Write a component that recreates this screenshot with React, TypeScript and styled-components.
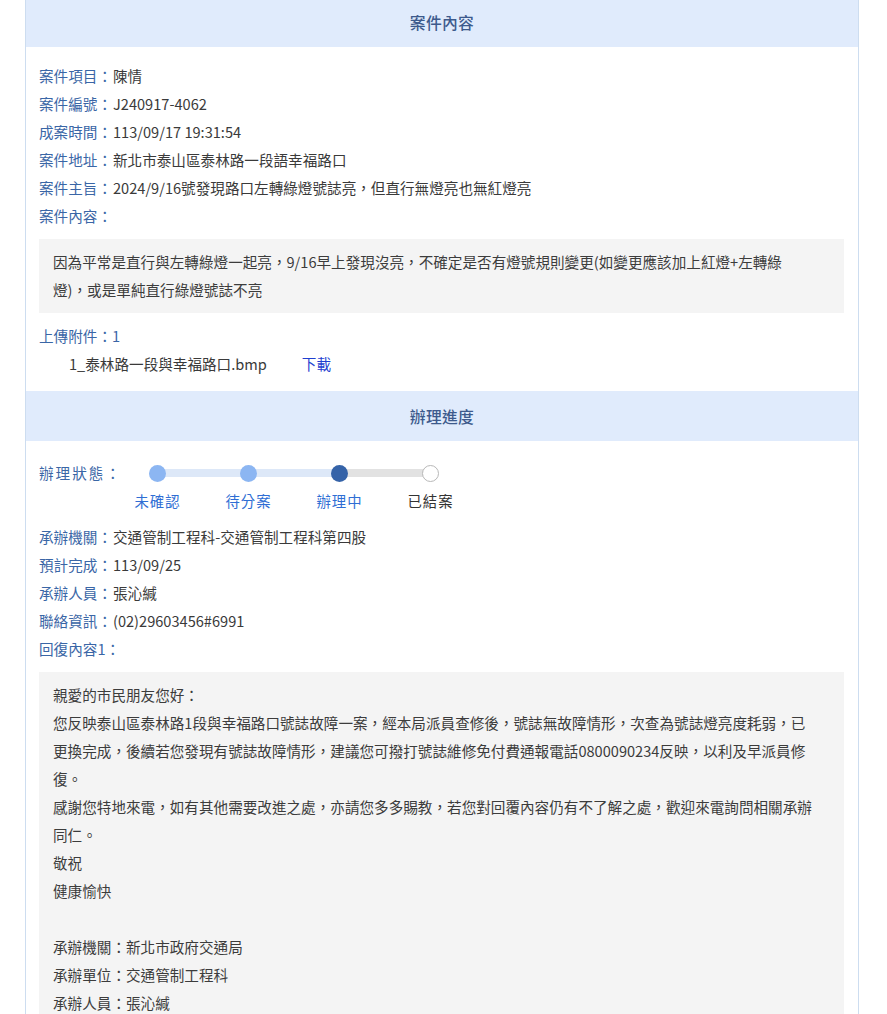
import styled, { createGlobalStyle } from 'styled-components';

const GlobalStyle = createGlobalStyle`
    html, body {
        margin: 0;
        padding: 0;
        background: #ffffff;
    }
    body {
        font-family: "Noto Sans CJK TC", "Noto Sans", sans-serif;
        color: #333333;
    }
`;

type Field = { label: string; value: string };

const caseFields: Field[] = [
    { label: '案件項目：', value: '陳情' },
    { label: '案件編號：', value: 'J240917-4062' },
    { label: '成案時間：', value: '113/09/17 19:31:54' },
    { label: '案件地址：', value: '新北市泰山區泰林路一段語幸福路口' },
    { label: '案件主旨：', value: '2024/9/16號發現路口左轉綠燈號誌亮，但直行無燈亮也無紅燈亮' },
    { label: '案件內容：', value: '' },
];

const handleFields: Field[] = [
    { label: '承辦機關：', value: '交通管制工程科-交通管制工程科第四股' },
    { label: '預計完成：', value: '113/09/25' },
    { label: '承辦人員：', value: '張沁緘' },
    { label: '聯絡資訊：', value: '(02)29603456#6991' },
    { label: '回復內容1：', value: '' },
];

const steps = [
    { name: '未確認', state: 'done' },
    { name: '待分案', state: 'done' },
    { name: '辦理中', state: 'current' },
    { name: '已結案', state: 'todo' },
] as const;

// lines kept as the source page wraps them
const caseContent = [
    '因為平常是直行與左轉綠燈一起亮，9/16早上發現沒亮，不確定是否有燈號規則變更(如變更應該加上紅燈+左轉綠',
    '燈)，或是單純直行綠燈號誌不亮',
];

const replyLines = [
    '親愛的市民朋友您好：',
    '您反映泰山區泰林路1段與幸福路口號誌故障一案，經本局派員查修後，號誌無故障情形，次查為號誌燈亮度耗弱，已',
    '更換完成，後續若您發現有號誌故障情形，建議您可撥打號誌維修免付費通報電話0800090234反映，以利及早派員修',
    '復。',
    '感謝您特地來電，如有其他需要改進之處，亦請您多多賜教，若您對回覆內容仍有不了解之處，歡迎來電詢問相關承辦',
    '同仁。',
    '敬祝',
    '健康愉快',
    '',
    '承辦機關：新北市政府交通局',
    '承辦單位：交通管制工程科',
    '承辦人員：張沁緘',
];

const App = () => {
    return (
        <>
            <GlobalStyle />
            <Card>
                <SectionHeader>案件內容</SectionHeader>
                <Section>
                    {caseFields.map((f) => (
                        <Row key={f.label}>
                            <Label>{f.label}</Label>
                            <Value>{f.value}</Value>
                        </Row>
                    ))}
                    <TextBox>
                        {caseContent.map((line, i) => (
                            <TextLine key={i}>{line}</TextLine>
                        ))}
                    </TextBox>
                    <Row $gap>
                        <Label>上傳附件：1</Label>
                    </Row>
                    <Attachment>
                        <span>1_泰林路一段與幸福路口.bmp</span>
                        <DownloadLink href="#">下載</DownloadLink>
                    </Attachment>
                </Section>

                <SectionHeader>辦理進度</SectionHeader>
                <Section>
                    <StatusRow>
                        <StatusLabel>辦理狀態：</StatusLabel>
                        <Steps>
                            {steps.map((s, i) => (
                                <Step key={s.name} $index={i} $state={s.state}>
                                    <Dot $state={s.state} />
                                    <StepName $state={s.state}>{s.name}</StepName>
                                </Step>
                            ))}
                        </Steps>
                    </StatusRow>
                    {handleFields.map((f) => (
                        <Row key={f.label}>
                            <Label>{f.label}</Label>
                            <Value>{f.value}</Value>
                        </Row>
                    ))}
                    <TextBox>
                        {replyLines.map((line, i) => (
                            <TextLine key={i}>{line || '\u00a0'}</TextLine>
                        ))}
                    </TextBox>
                </Section>
            </Card>
        </>
    );
};
export default App;

const Card = styled.main`
    width: 832px;
    margin: -3px 0 0 25px;
    border-left: 1px solid #cdddf0;
    border-right: 1px solid #cdddf0;
    background: #ffffff;
    font-size: 14.6px;
`;

const SectionHeader = styled.h2`
    margin: 0;
    height: 50px;
    display: flex;
    align-items: center;
    justify-content: center;
    background: #e0ebfc;
    color: #3d5a8c;
    font-size: 15.8px;
    font-weight: 500;
    letter-spacing: 0.3px;
`;

const Section = styled.section`
    padding: 15px 14px 13px 13px;
`;

const Row = styled.div<{ $gap?: boolean }>`
    display: flex;
    line-height: 28px;
    margin-top: ${(p) => (p.$gap ? '9px' : '0')};
`;

const Label = styled.span`
    color: #3a66a6;
    white-space: nowrap;
`;

const Value = styled.span`
    color: #3a3a3a;
    margin-left: 1px;
`;

const TextBox = styled.div`
    margin-top: 9px;
    background: #f4f4f4;
    padding: 9px 14px;
    line-height: 28px;
    color: #3c3c3c;
`;

const TextLine = styled.div`
    min-height: 28px;
    white-space: nowrap;
`;

const Attachment = styled.div`
    display: flex;
    gap: 35px;
    padding-left: 30px;
    line-height: 28px;
    color: #3a3a3a;
`;

const DownloadLink = styled.a`
    color: #1f3fd0;
    text-decoration: none;
`;

const StatusRow = styled.div`
    display: flex;
    align-items: flex-start;
    padding-top: 9px;
    margin-bottom: 12px;
`;

const StatusLabel = styled.span`
    width: 73px;
    color: #3a66a6;
    line-height: 16px;
    letter-spacing: 2px;
    white-space: nowrap;
`;

const Steps = styled.div`
    display: flex;
`;

type StepState = 'done' | 'current' | 'todo';

const Step = styled.div<{ $index: number; $state: StepState }>`
    width: 91px;
    display: flex;
    flex-direction: column;
    align-items: center;
    position: relative;
    &::before {
        content: '';
        display: ${(p) => (p.$index === 0 ? 'none' : 'block')};
        position: absolute;
        top: 4px;
        left: -50%;
        width: 100%;
        height: 8px;
        background: ${(p) => (p.$state === 'todo' ? '#e2e2e2' : '#dde8f8')};
    }
`;

const Dot = styled.span<{ $state: StepState }>`
    position: relative;
    z-index: 1;
    box-sizing: border-box;
    width: 17px;
    height: 17px;
    border-radius: 50%;
    background: ${(p) => (p.$state === 'done' ? '#8cb6f2' : p.$state === 'current' ? '#3563a8' : '#ffffff')};
    border: ${(p) => (p.$state === 'todo' ? '1.5px solid #b8b8b8' : 'none')};
`;

const StepName = styled.span<{ $state: StepState }>`
    margin-top: 9px;
    line-height: 20px;
    font-size: 14.4px;
    letter-spacing: 1px;
    color: ${(p) => (p.$state === 'todo' ? '#333333' : '#2f6ed4')};
`;
